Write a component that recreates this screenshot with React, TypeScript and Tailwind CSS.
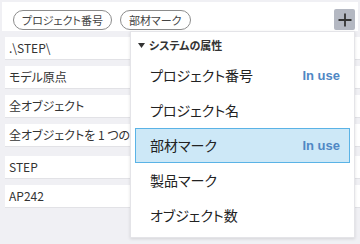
import React from 'react';

interface AttrItem {
  name: string;
  inUse: boolean;
  active: boolean;
}

const rows: string[] = [
  '.\\STEP\\',
  'モデル原点',
  '全オブジェクト',
  '全オブジェクトを 1 つのファイルに出力',
];

const rows2: string[] = ['STEP', 'AP242'];

const items: AttrItem[] = [
  { name: 'プロジェクト番号', inUse: true, active: false },
  { name: 'プロジェクト名', inUse: false, active: false },
  { name: '部材マーク', inUse: true, active: true },
  { name: '製品マーク', inUse: false, active: false },
  { name: 'オブジェクト数', inUse: false, active: false },
];

const font = "font-['Noto_Sans_CJK_JP',sans-serif] [font-feature-settings:'palt']";

const App: React.FC = () => {
  return (
    <div className={`relative h-[244px] w-[360px] overflow-hidden bg-[#f0f0f4] text-[#333] ${font}`}>
      {/* Top bar with chips */}
      <div className="ml-[2px] mt-[2px] flex h-[29px] w-[356px] items-start gap-[8px] bg-white pl-[11px] pr-[3px]">
        {['プロジェクト番号', '部材マーク'].map((c) => (
          <span
            key={c}
            className="mt-[8px] flex h-[20px] items-center rounded-full border border-[#8c8c8c] px-[8px] text-[11px] leading-none text-[#444]"
          >
            {c}
          </span>
        ))}
        <div className="ml-auto mt-[7px] flex h-[21px] min-w-[21px] items-center justify-center rounded-[2px] bg-[#b4b8c2]">
          <svg width="14" height="14" viewBox="0 0 14 14">
            <path d="M7 0.5v13M0.5 7h13" stroke="#333" strokeWidth="1.8" />
          </svg>
        </div>
      </div>

      {/* Rows */}
      <div className="ml-[5px] mt-[6px] flex flex-col gap-[7px]">
        {rows.map((r) => (
          <div
            key={r}
            className="flex h-[22px] w-[360px] items-center whitespace-nowrap bg-white pl-[4px] text-[12px] shadow-[0_1px_0_#e2e2e6]"
          >
            {r}
          </div>
        ))}
      </div>
      <div className="ml-[5px] mt-[10px] flex flex-col gap-[7px]">
        {rows2.map((r) => (
          <div
            key={r}
            className="flex h-[22px] w-[360px] items-center bg-white pl-[4px] text-[12px] shadow-[0_1px_0_#e2e2e6]"
          >
            {r}
          </div>
        ))}
      </div>

      {/* Dropdown */}
      <div className="absolute left-[130px] top-[31px] flex h-[207px] w-[225px] flex-col border border-[#e4e4e8] bg-white shadow-[0_1px_3px_rgba(0,0,0,0.12)]">
        <div className="flex h-[26px] items-center gap-[4px] pl-[7px] text-[11px] font-bold text-[#333]">
          <svg width="7" height="5" viewBox="0 0 7 5">
            <path d="M0 0h7L3.5 5z" fill="#333" />
          </svg>
          システムの属性
        </div>
        <div className="flex flex-col px-[4px]">
          {items.map((it) => (
            <div
              key={it.name}
              className={
                it.active
                  ? 'flex h-[35px] items-center justify-between border border-[#5ab3e6] bg-[#cde8f7] pl-[14px] pr-[9px]'
                  : 'flex h-[35px] items-center justify-between border border-transparent pl-[14px] pr-[9px]'
              }
            >
              <span className="text-[14px] text-[#222]">{it.name}</span>
              {it.inUse && (
                <span className="font-['Liberation_Sans',sans-serif] text-[13px] font-bold text-[#4f87c4]">
                  In use
                </span>
              )}
            </div>
          ))}
        </div>
      </div>
    </div>
  );
};

export default App;
